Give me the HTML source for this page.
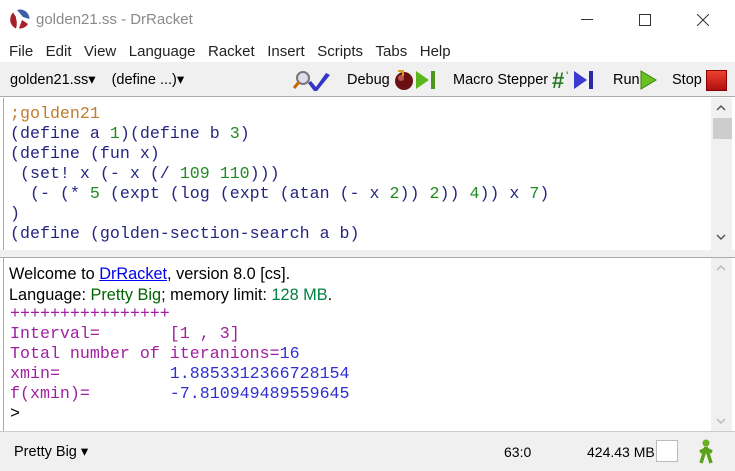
<!DOCTYPE html>
<html><head><meta charset="utf-8"><style>
*{margin:0;padding:0;box-sizing:border-box}
body{width:735px;height:471px;overflow:hidden;background:#fff;font-family:"Liberation Sans",sans-serif;position:relative}
.a{position:absolute;white-space:pre}
.m{font-family:"Liberation Mono",monospace;font-size:16.65px}
.k{color:#262680}.n{color:#228b22}.c{color:#c27c2e}
.p{color:#a020a0}.b{color:#3030d0}
</style></head><body>
<svg class="a" style="left:10px;top:9px" width="20" height="20" viewBox="0 0 20 20"><circle cx="10" cy="10" r="9.5" fill="#fff"/><path d="M10 .5A9.5 9.5 0 0 1 19.5 10L13 8 7 1z" fill="#3a5fa8"/><path d="M3 4 C6 8 8 13 6 19.5 A9.5 9.5 0 0 1 3 4z" fill="#a8202a"/><path d="M9 19.5 L12 11 L18 15 A9.5 9.5 0 0 1 9 19.5z" fill="#a8202a"/><path d="M.5 10A9.5 9.5 0 0 1 3 3.5L6 8 4 18A9.5 9.5 0 0 1 .5 10z" fill="#a8202a"/></svg>
<div class="a" style="left:36px;top:11px;font-size:15px;color:#8a8a8a">golden21.ss - DrRacket</div>
<div class="a" style="left:581px;top:19px;width:12px;height:1px;background:#333"></div>
<div class="a" style="left:639px;top:14px;width:12px;height:12px;border:1px solid #333"></div>
<svg class="a" style="left:697px;top:14px" width="12" height="12"><path d="M0 0L12 12M12 0L0 12" stroke="#333" stroke-width="1"/></svg>
<div class="a" style="left:9px;top:43px;font-size:15px;color:#222">File&nbsp;&nbsp;&nbsp;Edit&nbsp;&nbsp;&nbsp;View&nbsp;&nbsp;&nbsp;Language&nbsp;&nbsp;&nbsp;Racket&nbsp;&nbsp;&nbsp;Insert&nbsp;&nbsp;&nbsp;Scripts&nbsp;&nbsp;&nbsp;Tabs&nbsp;&nbsp;&nbsp;Help</div>
<div class="a" style="left:0;top:62px;width:735px;height:35px;background:#f0f0f0;border-bottom:1px solid #aaa"></div>
<div class="a" style="left:10px;top:72px;font-size:14.5px;color:#000">golden21.ss▾&nbsp;&nbsp;&nbsp;&nbsp;(define ...)▾</div>
<svg class="a" style="left:291px;top:69px" width="42" height="22"><circle cx="12" cy="9" r="6" fill="#dde" stroke="#777" stroke-width="2"/><path d="M8 13L3 19" stroke="#c60" stroke-width="3"/><path d="M20 12l5 6 10-14 4 2-13 16h-3l-6-8z" fill="#3535c8"/></svg>
<div class="a" style="left:347px;top:72px;font-size:14.5px">Debug</div>
<svg class="a" style="left:394px;top:68px" width="45" height="24"><circle cx="10" cy="13" r="9" fill="#6a1010"/><circle cx="7" cy="10" r="3" fill="#b55"/><path d="M4 3h5v5" stroke="#d8a020" stroke-width="2" fill="none"/><path d="M22 3l13 9-13 9z" fill="#5ab81c"/><rect x="37" y="3" width="4" height="18" fill="#4a9818"/></svg>
<div class="a" style="left:453px;top:72px;font-size:14.5px">Macro Stepper</div>
<svg class="a" style="left:552px;top:68px" width="45" height="24"><text x="0" y="20" font-size="22" font-weight="bold" fill="#2a7a2a" font-family="Liberation Sans">#</text><text x="14" y="12" font-size="12" fill="#2a7a2a">'</text><path d="M22 3l13 9-13 9z" fill="#3a3ad0"/><rect x="37" y="3" width="4" height="18" fill="#2a2aa0"/></svg>
<div class="a" style="left:613px;top:72px;font-size:14.5px">Run</div>
<svg class="a" style="left:640px;top:69px" width="18" height="22"><path d="M1 2l15 9-15 9z" fill="#6ac020" stroke="#3a8010"/></svg>
<div class="a" style="left:672px;top:72px;font-size:14.5px">Stop</div>
<div class="a" style="left:706px;top:70px;width:21px;height:21px;background:linear-gradient(#f04030,#b01010);border:1px solid #800"></div>
<div class="a" style="left:3px;top:98px;width:729px;height:152px;background:#fff;border-left:1px solid #aaa"></div>
<div class="a" style="left:711px;top:98px;width:21px;height:152px;background:#f0f0f0"></div>
<div class="a" style="left:713px;top:118px;width:19px;height:21px;background:#cdcdcd"></div>
<svg class="a" style="left:716px;top:104px" width="10" height="8"><path d="M1 6l4-4 4 4" stroke="#555" stroke-width="1.5" fill="none"/></svg>
<svg class="a" style="left:716px;top:234px" width="10" height="8"><path d="M1 1l4 4 4-4" stroke="#555" stroke-width="1.5" fill="none"/></svg>
<div class="a m" style="left:10px;top:104px;line-height:20px"><span class="c">;golden21</span>
<span class="k">(define a <span class="n">1</span>)(define b <span class="n">3</span>)</span>
<span class="k">(define (fun x)</span>
<span class="k"> (set! x (- x (/ <span class="n">109 110</span>)))</span>
<span class="k">  (- (* <span class="n">5</span> (expt (log (expt (atan (- x <span class="n">2</span>)) <span class="n">2</span>)) <span class="n">4</span>)) x <span class="n">7</span>)</span>
<span class="k">)</span>
<span class="k">(define (golden-section-search a b)</span></div>
<div class="a" style="left:0;top:250px;width:735px;height:8px;background:#f0f0f0;border-bottom:1px solid #aaa"></div>
<div class="a" style="left:3px;top:258px;width:729px;height:173px;border-left:1px solid #aaa"></div>
<div class="a" style="left:711px;top:258px;width:21px;height:173px;background:#f0f0f0"></div>
<svg class="a" style="left:716px;top:264px" width="10" height="8"><path d="M1 6l4-4 4 4" stroke="#bbb" stroke-width="1.5" fill="none"/></svg>
<svg class="a" style="left:716px;top:418px" width="10" height="8"><path d="M1 1l4 4 4-4" stroke="#bbb" stroke-width="1.5" fill="none"/></svg>
<div class="a" style="left:9px;top:264px;font-size:16.3px;line-height:21px">Welcome to <span style="color:#0000ee;text-decoration:underline">DrRacket</span>, version 8.0 [cs].
Language: <span style="color:#006400">Pretty Big</span>; memory limit: <span style="color:#008040">128 MB</span>.</div>
<div class="a m" style="left:10px;top:304px;line-height:20px"><span class="p">++++++++++++++++
Interval=       </span><span class="p">[1 , 3]</span>
<span class="p">Total number of iteranions=</span><span class="b">16</span>
<span class="p">xmin=           </span><span class="b">1.8853312366728154</span>
<span class="p">f(xmin)=        </span><span class="b">-7.810949489559645</span>
<span style="color:#000">&gt;</span></div>
<div class="a" style="left:0;top:431px;width:735px;height:40px;background:#f0f0f0;border-top:1px solid #ccc"></div>
<div class="a" style="left:14px;top:444px;font-size:14.5px">Pretty Big ▾</div>
<div class="a" style="left:504px;top:444px;font-size:14px">63:0</div>
<div class="a" style="left:587px;top:444px;font-size:14px">424.43 MB</div>
<div class="a" style="left:656px;top:440px;width:22px;height:22px;background:#fff;border:1px solid #bbb"></div>
<svg class="a" style="left:697px;top:439px" width="18" height="25"><circle cx="9" cy="4" r="3.5" fill="#6ab020"/><path d="M9 8L4 24M9 8l5 16M3 13l6-3 6 3" stroke="#5aa018" stroke-width="3.5" fill="none"/></svg>
</body></html>
